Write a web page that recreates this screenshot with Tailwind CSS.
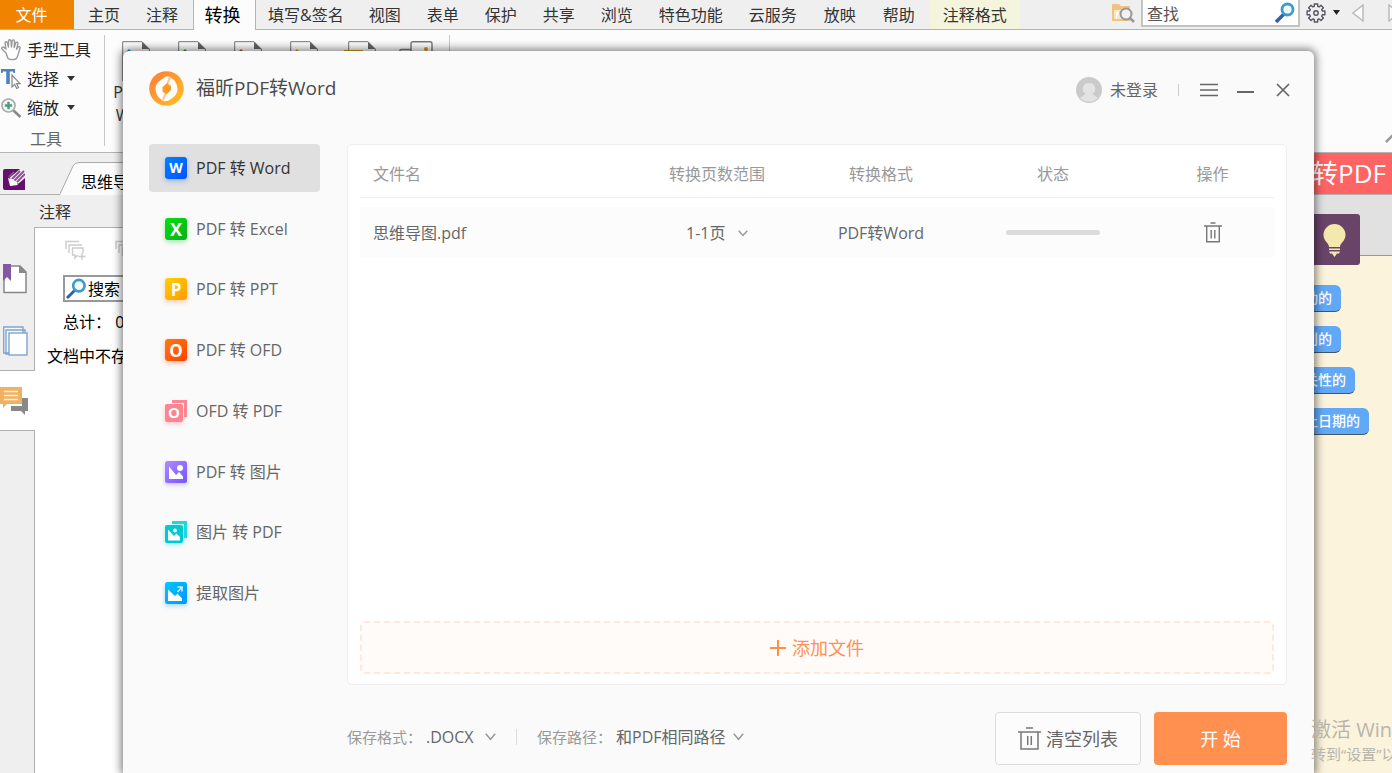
<!DOCTYPE html>
<html lang="zh-CN">
<head>
<meta charset="utf-8">
<meta name="viewport" content="width=device-width, initial-scale=1">
<title>福昕PDF转Word</title>
<script src="https://cdn.jsdelivr.net/npm/@tailwindcss/browser@4"></script>
</head>
<body class="relative h-screen overflow-hidden bg-white font-['Open_Sans','Noto_Sans_CJK_SC',sans-serif] text-base text-[#333]">

<!-- Editor window -->
<div class="flex h-full flex-col">
  <!-- Menu bar -->
  <nav class="flex h-[30px] shrink-0 border-b border-[#b4b4b4] bg-[#efefef] leading-[30px] whitespace-nowrap">
    <button class="w-[74px] bg-[#f08300] pr-[11px] text-white">文件</button>
    <button class="ml-px px-[13px]">主页</button>
    <button class="px-[13px]">注释</button>
    <button class="-mb-px ml-0.5 h-[30px] w-[63px] border-x border-[#b4b4b4] bg-[#fcfcfc] pr-1 text-lg leading-[30px] text-black">转换</button>
    <button class="px-[12px]">填写&amp;签名</button>
    <button class="px-[13px]">视图</button>
    <button class="px-[13px]">表单</button>
    <button class="px-[13px]">保护</button>
    <button class="px-[13px]">共享</button>
    <button class="px-[13px]">浏览</button>
    <button class="px-[13px]">特色功能</button>
    <button class="px-[13px]">云服务</button>
    <button class="px-[14px]">放映</button>
    <button class="px-[13px]">帮助</button>
    <button class="ml-0.5 bg-[#f4f5dc] px-[13px]">注释格式</button>
    <div class="ml-auto flex shrink-0">
      <button aria-label="搜索文件夹" class="mr-[6px] pb-0.5">
        <svg width="23" height="23" viewBox="0 0 23 23" fill="none"><path d="M0 2h7l2 2h9v15H0z" fill="#f0c382"/><path d="M2 8h15v9H2z" fill="#fae6c5"/><path d="M4 18V10h3l-3 8" fill="#fff"/><circle cx="14" cy="12" r="5.500" fill="#f2f2f2" stroke="#999" stroke-width="2"/><path d="m18 16 4 4" stroke="#999" stroke-width="2.500"/></svg>
      </button>
      <label class="flex h-[27px] w-[159px] items-center border-2 border-t-0 border-[#c3c3c3] bg-white pr-0.5">
        <input type="text" aria-label="查找" placeholder="查找" class="h-full w-full min-w-0 pt-0.5 pl-1 outline-none placeholder:text-[#555]">
        <svg class="shrink-0" width="22" height="22" viewBox="0 0 22 22" fill="none"><path d="m2 20 8-8" stroke="#355ea5" stroke-width="3.500"/><circle cx="13.500" cy="7.500" r="5.500" fill="#f3fafe" stroke="#3d9cca" stroke-width="2.800"/></svg>
      </label>
      <button aria-label="设置" class="ml-[6px] flex items-start gap-[7px] pt-[3px]">
        <svg width="20" height="20" viewBox="0 0 20 20" fill="none" stroke="#556" stroke-width="1.400"><path d="M8.300 1h3.400v2.300l1.500.6 1.700-1.600 2.500 2.500-1.700 1.700.6 1.500H18.900v3.800h-2.600l-.6 1.500 1.700 1.700-2.500 2.500-1.700-1.600-1.500.6V19H8.300v-2.500l-1.500-.6-1.700 1.600L2.600 15l1.700-1.700-.6-1.500H1.100V8h2.600l.6-1.500-1.700-1.700 2.500-2.500 1.700 1.600 1.500-.6z" stroke-linejoin="round"/><circle cx="10" cy="10" r="2.200"/></svg>
        <svg class="mt-[7px]" width="7" height="5"><path d="M0 0h7L3.500 5z" fill="#222"/></svg>
      </button>
      <button aria-label="上一个" class="ml-[12px] pb-1"><svg width="13" height="18" viewBox="0 0 13 18"><path d="M11 1v16L1 9z" fill="#fafafa" stroke="#bbb" stroke-width="1.500"/></svg></button>
      <button aria-label="下一个" class="ml-[23px] w-1 overflow-hidden pb-1"><svg width="13" height="18" viewBox="0 0 13 18"><path d="M1 1v16L11 9z" fill="#fafafa" stroke="#bbb" stroke-width="1.500"/></svg></button>
    </div>
  </nav>

  <!-- Ribbon -->
  <div class="flex h-[123px] shrink-0 border-b border-[#b4b4b4] bg-[#fcfcfc] pt-[5px]">
    <div class="flex w-[104px] shrink-0 flex-col">
      <button class="flex h-[29px] items-center gap-1 pl-px text-[#222]">
        <svg width="22" height="24" viewBox="0 0 22 24" fill="#fdfdfd" stroke="#999" stroke-width="1.400" stroke-linejoin="round"><path d="M5 15 1 11c-.8-1.500 1-2.500 2.200-1.500L5 11 4 5c0-1.700 2-1.700 2.300-.3L7.500 9V3c0-1.700 2.300-1.700 2.500 0l.5 6 .6-6c.3-1.600 2.400-1.400 2.400.2L13.200 9.500l1.500-4.500c.6-1.500 2.500-.8 2.200.7l-1.300 5.500L17 9c1-1 2.500 0 2 1.200-1 2.800-1.500 7-3.500 10.300-1 1.500-7 1.500-8.500 0z"/></svg>手型工具</button>
      <button class="flex h-[29px] items-center gap-1 pl-px text-[#222]">
        <svg width="22" height="22" viewBox="0 0 22 22"><path d="M0 1h14v4h-1.500l-.5-1.500H8.800V16H5.200V3.500H2L1.500 5H0z" fill="#4f81bd"/><path d="M11 7v12l2.700-2.500 2 4 1.800-.9-2-3.900h3.500z" fill="#fff" stroke="#888" stroke-width="1.200"/></svg>选择<svg class="ml-1" width="8" height="5"><path d="M0 0h8L4 5z" fill="#333"/></svg></button>
      <button class="flex h-[29px] items-center gap-1 pl-px text-[#222]">
        <svg width="22" height="22" viewBox="0 0 22 22" fill="none"><circle cx="7.500" cy="8.500" r="6.500" fill="#f5f9f7" stroke="#aaa" stroke-width="1.700"/><path d="M7.500 4.800v7.400M3.800 8.500h7.400" stroke="#4c9b80" stroke-width="2.400"/><path d="m12.500 13.500 7 6.500" stroke="#888" stroke-width="2.500"/></svg>缩放<svg class="ml-1" width="8" height="5"><path d="M0 0h8L4 5z" fill="#333"/></svg></button>
      <div class="h-[29px] pr-3 text-center leading-[34px] text-[#666]">工具</div>
    </div>
    <div class="mb-[6px] flex border-x border-[#c8c8c8] pt-[6px] pr-[5px] pl-[3px]">
      <button class="flex w-14 flex-col items-center leading-[23px]">
        <svg class="shrink-0" width="28" height="40" viewBox="0 0 28 40"><path d="M.7 40V.7H20l7.300 7.300v32" fill="#fff" stroke="#777"/><path d="M20 .7 27.300 8H20z" fill="#666"/><path d="M3 12 7 8l4 4z" fill="#00a5d5"/></svg>
        <span>PDF转</span><span>Word</span>
      </button>
      <button aria-label="PDF转Excel" class="flex w-14 justify-center"><svg width="28" height="40" viewBox="0 0 28 40"><path d="M.7 40V.7H20l7.300 7.300v32" fill="#fff" stroke="#777"/><path d="M20 .7 27.300 8H20z" fill="#666"/><path d="M3 12 7 8l4 4z" fill="#4c9b20"/></svg></button>
      <button aria-label="PDF转PPT" class="flex w-14 justify-center"><svg width="28" height="40" viewBox="0 0 28 40"><path d="M.7 40V.7H20l7.300 7.300v32" fill="#fff" stroke="#777"/><path d="M20 .7 27.300 8H20z" fill="#666"/><path d="M3 12 7 8l4 4z" fill="#d9452c"/></svg></button>
      <button aria-label="PDF转图片" class="flex w-14 justify-center"><svg width="28" height="40" viewBox="0 0 28 40"><path d="M.7 40V.7H20l7.300 7.300v32" fill="#fff" stroke="#777"/><path d="M20 .7 27.300 8H20z" fill="#666"/><path d="M3 12 7 8l4 4z" fill="#e0a010"/></svg></button>
      <button aria-label="转换其他格式" class="flex w-14 justify-center"><svg width="32" height="40" viewBox="0 0 32 40"><path d="M4.700 40V.7H24l7.300 7.300v32" fill="#fff" stroke="#777"/><path d="M24 .7 31.300 8H24z" fill="#666"/><path d="M0 9h19v8H0z" fill="#dfa21c"/></svg></button>
      <button aria-label="图片转PDF" class="flex w-14 justify-center"><svg width="34" height="40" viewBox="0 0 34 40" fill="#fff" stroke="#777" stroke-width="1.400"><rect x=".7" y="8.500" width="24" height="24" rx="2"/><rect x="12" y=".7" width="21" height="24" rx="2"/><circle cx="27" cy="8" r="2" fill="#d99a10" stroke="none"/></svg></button>
    </div>
    <button aria-label="折叠功能区" class="ml-auto w-[7px] self-end overflow-hidden pb-[9px]"><svg width="14" height="9" viewBox="0 0 14 9" fill="none"><path d="m1 8 6-6 6 6" stroke="#999" stroke-width="2.500"/></svg></button>
  </div>

  <!-- Document tabs -->
  <div class="flex h-[42px] shrink-0 border-b border-[#b0b0b0] bg-[#efefef]">
    <svg class="mt-4 ml-[3px] shrink-0" width="22" height="22" viewBox="0 0 22 22" fill="none"><path d="M0 2q0-2 2-2h15L7 8.500 8.500 15l7-.5L22 9v12H2q-2 0-2-2z" fill="#640f6c"/><path d="m6 8 5-5M9 10l8-8M11 12 21 2M14 13l8-8" stroke="#8e4a96" stroke-width="1.800"/><path d="m5 9 2 8 8-1-4-5z" fill="#fff"/></svg>
    <div class="ml-[35px] flex">
      <svg class="mt-[9px] -mb-px shrink-0" width="21" height="33" viewBox="0 0 21 33"><path d="M0 33 13 4q2-3.500 6-3.500h2V33z" fill="#fcfcfc"/><path d="M0 32 13 4q2-3.500 6-3.500h2" fill="none" stroke="#aaa"/></svg>
      <button class="mt-[9px] -mb-px w-[64px] overflow-hidden border-t border-r border-[#aaa] bg-[#fcfcfc] text-left leading-[38px] whitespace-nowrap text-black">思维导图</button>
    </div>
    <a href="#" class="ml-auto w-[220px] bg-[#ff6464] pr-[6px] text-right text-[26px] leading-10 text-white">PPT转PDF</a>
  </div>

  <!-- Work area -->
  <div class="flex min-h-0 flex-1">
    <aside class="flex w-[300px] shrink-0 flex-col bg-[#efefef]">
      <h2 class="h-8 shrink-0 pl-[39px] leading-[34px]">注释</h2>
      <div class="flex min-h-0 flex-1">
        <div class="flex w-[35px] shrink-0 flex-col">
          <div class="flex h-[144px] flex-col gap-8 border-r border-b border-[#b0b0b0] pt-[37px] pl-[3px]">
            <button aria-label="书签"><svg width="24" height="30" viewBox="0 0 24 30"><path d="M1 8v20.500h22V8l-6-6H8" fill="#fff" stroke="#888" stroke-width="1.500"/><path d="M16 1v8h7.500z" fill="#888"/><path d="M0 0h8v17l-4-4-4 4z" fill="#8456a4"/></svg></button>
            <button aria-label="页面"><svg width="25" height="30" viewBox="0 0 25 30" fill="#f8fbfe" stroke="#7fa5cf" stroke-width="1.400"><path d="M.7 26V1H20v26H.7zM3 28V4h19v24z"/><rect x="6" y="7" width="18" height="22" fill="#fff"/></svg></button>
          </div>
          <div class="h-[59px] bg-white pt-[15px]">
            <button aria-label="注释面板"><svg width="29" height="30" viewBox="0 0 29 30"><path d="M22 12h6v13h-3v4l-4-4H11v-5h11z" fill="#888"/><path d="M0 1h22v17H7l-4 4v-4H0z" fill="#efb263"/><path d="M4 5.500h14M4 9.500h14M4 13.500h14" stroke="#fff2dc" stroke-width="1.700"/></svg></button>
          </div>
          <div class="flex-1 border-t border-r border-[#b0b0b0]"></div>
        </div>
        <section class="flex-1 border-t border-[#b0b0b0] bg-white text-black">
          <div class="flex gap-[29px] pt-[12px] pl-[30px]">
            <button aria-label="展开全部"><svg width="21" height="21" viewBox="0 0 21 21" fill="none" stroke="#ccc" stroke-width="1.400"><path d="M1 9V1.500h13M4 13V5h13M18 13V8H7.500v7H10v3l3-3M17 13v7m-3.500-3.500h7"/></svg></button>
            <button aria-label="折叠全部"><svg width="21" height="21" viewBox="0 0 21 21" fill="none" stroke="#ccc" stroke-width="1.400"><path d="M1 9V1.500h13M4 13V5h13M18 13V8H7.500v7H10v3l3-3M13.500 16.500h7"/></svg></button>
          </div>
          <label class="mt-[14px] ml-[28px] flex h-[27px] w-[200px] items-center gap-px border-2 border-[#999] pl-px">
            <svg class="shrink-0" width="21" height="21" viewBox="0 0 22 22" fill="none"><path d="m1 21 8-8" stroke="#355ea5" stroke-width="3"/><circle cx="13.500" cy="8" r="6" fill="#f3fafe" stroke="#3d9cca" stroke-width="2.800"/></svg>
            <input type="text" aria-label="搜索" placeholder="搜索" class="w-full min-w-0 outline-none placeholder:text-black">
          </label>
          <p class="mt-[3px] pl-[28px] leading-[34px]">总计：&nbsp;0</p>
          <p class="pl-[12px] leading-[35px]">文档中不存在</p>
        </section>
      </div>
    </aside>
    <!-- Mind map -->
    <main class="relative flex-1 bg-[#fbf3dc]">
      <div class="h-[61px] border-b border-[#999] bg-[#e1e1e1]"></div>
      <button aria-label="提示" class="absolute top-[19px] right-8 flex h-[51px] w-[60px] justify-end rounded-[3px] bg-[#694468] pt-[10px] pr-[14px]">
        <svg width="23" height="33" viewBox="0 0 23 33"><path d="M6 23c0-4-5.500-6-5.500-12a11 11 0 0 1 22 0c0 6-5.500 8-5.500 12z" fill="#f3e9ad"/><path d="M6 24.500h11v1.500H6zM6 27.500h11l-1 2h-2L11.500 33 9 29.500H7z" fill="#f3e9ad"/></svg>
      </button>
      <ul class="absolute top-[90px] right-[23px] flex w-[102px] flex-col items-start gap-[14px] text-sm leading-[26px] font-medium whitespace-nowrap text-white">
        <li class="rounded-md border-b border-[#456] bg-[#61a9f8] px-[9px]">可行动的</li>
        <li class="rounded-md border-b border-[#456] bg-[#61a9f8] px-[9px]">可识别的</li>
        <li class="rounded-md border-b border-[#456] bg-[#61a9f8] px-[9px]">有相关性的</li>
        <li class="rounded-md border-b border-[#456] bg-[#61a9f8] px-[9px]">有截止日期的</li>
      </ul>
    </main>
  </div>
</div>

<!-- Converter dialog -->
<div role="dialog" aria-labelledby="dialog-title" class="absolute top-[51px] right-[78px] bottom-0 left-[123px] flex flex-col rounded-t-md bg-[#fafafa] pr-[27px] pl-[26px] text-[#666] shadow-[0_0_8px_2px_rgba(0,0,0,0.5)]">
  <header class="flex h-[93px] shrink-0 items-start pt-5">
    <div class="flex h-[34px] items-center gap-3">
      <svg width="35" height="35" viewBox="0 0 35 35"><defs><linearGradient id="ring" x1="0" y1="0" x2="1" y2="1"><stop offset="0" stop-color="#ff7a3c"/><stop offset="1" stop-color="#ffc322"/></linearGradient></defs><circle cx="17.500" cy="17.500" r="17.300" fill="url(#ring)"/><path d="M15 7q2.500-3 6.500-.5 7 4 7 11.500 0 6-6.500 10-5 4-9 1-6.500-4-6.500-11.500 0-6 8.500-10.500z" fill="#fff"/><path d="m20 5.500 2 1-3 7.500-2-.5zM15 29.500l-2-1 3-7.500 2 .5z" fill="#ffc690"/><path d="m18 12 4 3v4l-4.500 4.500-4-3v-4.500z" fill="#ff9c25"/></svg>
      <h1 id="dialog-title" class="text-[19px] text-[#4a4a4a]">福昕PDF转Word</h1>
    </div>
    <div class="ml-auto flex h-[38px] items-center">
      <button class="flex items-center gap-2"><svg width="26" height="26" viewBox="0 0 26 26"><circle cx="13" cy="13" r="13" fill="#cacaca"/><path d="M13 6a6 6 0 0 1 3.500 11l5.500 4a13 13 0 0 1-18 0l5.500-4A6 6 0 0 1 13 6z" fill="#e3e3e3"/></svg>未登录</button>
      <span class="ml-[20px] h-3 w-px bg-[#ccc]"></span>
      <button aria-label="菜单" class="ml-[21px]"><svg width="18" height="14" stroke="#666" stroke-width="1.600"><path d="M0 1.500h18M0 7h18M0 12.500h18"/></svg></button>
      <button aria-label="最小化" class="ml-[19px] pt-[5px]"><svg width="17" height="3"><path d="M0 0h17v2H0z" fill="#666"/></svg></button>
      <button aria-label="关闭" class="mr-[-4px] ml-[21px]"><svg width="16" height="14" viewBox="0 0 16 14" stroke="#666" stroke-width="1.700"><path d="m2 1 12 12M14 1 2 13"/></svg></button>
    </div>
  </header>

  <div class="flex min-h-0 flex-1 gap-[27px]">
    <nav class="flex h-[473px] w-[171px] shrink-0 flex-col justify-between">
      <button class="flex h-12 shrink-0 items-center gap-[9px] rounded bg-[#e0e0e0] pl-4 text-[#333]">
        <span class="flex size-[22px] items-center justify-center rounded-[3px] bg-linear-to-br from-[#0783ff] to-[#0050ff] text-[14px] leading-none font-bold text-white shadow-[0_2px_5px_#0060ff55]">W</span>PDF 转 Word</button>
      <button class="flex h-12 shrink-0 items-center gap-[9px] pl-4">
        <span class="flex size-[22px] items-center justify-center rounded-[3px] bg-linear-to-br from-[#00e30b] to-[#0cae18] text-[18px] leading-none font-bold text-white shadow-[0_2px_5px_#00b01055]">X</span>PDF 转 Excel</button>
      <button class="flex h-12 shrink-0 items-center gap-[9px] pl-4">
        <span class="flex size-[22px] items-center justify-center rounded-[3px] bg-linear-to-br from-[#ffd000] to-[#ff9c00] text-[17px] leading-none font-bold text-white shadow-[0_2px_5px_#ff700055]">P</span>PDF 转 PPT</button>
      <button class="flex h-12 shrink-0 items-center gap-[9px] pl-4">
        <span class="flex size-[22px] items-center justify-center rounded-[3px] bg-linear-to-br from-[#ff7a10] to-[#ff3c00] text-[17px] leading-none font-bold text-white shadow-[0_2px_5px_#ff400055]">O</span>PDF 转 OFD</button>
      <button class="flex h-12 shrink-0 items-center gap-[9px] pl-4">
        <span class="flex size-[22px] items-end bg-[linear-gradient(#ff8795,#ff8795),linear-gradient(#ff8795,#ff8795)] bg-[size:15px_3px,3px_17px] bg-[position:top_right,top_right] bg-no-repeat"><span class="flex size-[18px] items-center justify-center rounded-[2px] bg-[#ff8390] text-[15px] leading-none font-bold text-white shadow-[0_2px_5px_#ff607055]">O</span></span>OFD 转 PDF</button>
      <button class="flex h-12 shrink-0 items-center gap-[9px] pl-4">
        <svg class="overflow-visible drop-shadow-[0_2px_2px_#7a50ff55]" width="22" height="22" viewBox="0 0 22 22"><defs><linearGradient id="violet" x1="0" y1="0" x2="1" y2="1"><stop offset="0" stop-color="#b08aff"/><stop offset="1" stop-color="#7654ff"/></linearGradient></defs><rect width="22" height="22" rx="2.500" fill="url(#violet)"/><path d="M4 5.500 11 14l3-3 4 4.500V18H4z" fill="#fff"/><circle cx="15" cy="7" r="3" fill="#fff"/></svg>PDF 转 图片</button>
      <button class="flex h-12 shrink-0 items-center gap-[9px] pl-4">
        <svg class="overflow-visible drop-shadow-[0_2px_2px_#00c8c855]" width="22" height="22" viewBox="0 0 22 22"><path d="M7 0h15v17h-3V3H7z" fill="#1fd8d8"/><rect y="4" width="18" height="18" rx="2" fill="#00c9d4"/><path d="M3 8.500 9 15l2.500-2.500L15 16v3.500H3z" fill="#fff"/><circle cx="10" cy="9.500" r="1.900" fill="#fff"/></svg>图片 转 PDF</button>
      <button class="flex h-12 shrink-0 items-center gap-[9px] pl-4">
        <svg class="overflow-visible drop-shadow-[0_2px_2px_#008cff55]" width="22" height="22" viewBox="0 0 22 22"><defs><linearGradient id="sky" x1="0" y1="0" x2="1" y2="1"><stop offset="0" stop-color="#00c8ff"/><stop offset="1" stop-color="#0094ff"/></linearGradient></defs><rect width="22" height="22" rx="2.500" fill="url(#sky)"/><path d="M3 7.500 10 14l2.500-2.500L17 16.500V19H3z" fill="#fff"/><path d="M12.500 5H17v4.500M17 5l-4.500 5" fill="none" stroke="#c9efff" stroke-width="1.600"/></svg>提取图片</button>
    </nav>

    <section class="flex min-w-0 flex-1 flex-col rounded-[5px] border border-[#efefef] bg-white px-3 pb-[10px]">
      <table class="w-full table-fixed border-separate border-spacing-0">
        <thead>
          <tr class="h-[53px] text-[#999]">
            <th scope="col" class="border-b border-[#efefef] pt-[6px] pl-[13px] text-left font-normal">文件名</th>
            <th scope="col" class="w-[180px] border-b border-[#efefef] pt-[6px] font-normal">转换页数范围</th>
            <th scope="col" class="w-[148px] border-b border-[#efefef] pt-[6px] font-normal">转换格式</th>
            <th scope="col" class="w-[196px] border-b border-[#efefef] pt-[6px] font-normal">状态</th>
            <th scope="col" class="w-[123px] border-b border-[#efefef] pt-[6px] font-normal">操作</th>
          </tr>
        </thead>
        <tbody class="before:block before:h-[9px] before:content-['']">
          <tr class="h-[51px] bg-[#fcfcfc] text-center">
            <td class="pl-[13px] text-left">思维导图.pdf</td>
            <td>
              <div class="relative inline-block w-[62px] align-middle">
                <select aria-label="转换页数范围" class="w-full appearance-none outline-none"><option>1-1页</option></select>
                <svg class="pointer-events-none absolute top-[9px] right-0" width="10" height="7" viewBox="0 0 10 7" fill="none"><path d="m.7.8 4.300 4.700L9.300.8" stroke="#999" stroke-width="1.500"/></svg>
              </div>
            </td>
            <td>PDF转Word</td>
            <td><div role="progressbar" aria-label="转换进度" aria-valuenow="0" class="mx-auto h-[5px] w-[94px] rounded-full bg-[#dcdcdc]"></div></td>
            <td><button aria-label="删除" class="block w-full"><svg class="mx-auto" width="18" height="21" viewBox="0 0 18 21" fill="none" stroke="#777" stroke-width="1.400"><path d="M6.500 1h5M0 4h18M2.700 4v15.800h12.600V4M7.200 8v8.500M10.800 8v8.500"/></svg></button></td>
          </tr>
        </tbody>
      </table>
      <button class="mt-auto flex h-[53px] items-center justify-center gap-[6px] rounded border-2 border-dashed border-[#ffe8dc] bg-[#fffbf9] text-lg text-[#ff9050]"><svg width="16" height="16"><path d="M7 0h2v7h7v2H9v7H7V9H0V7h7z" fill="#ff9040"/></svg>添加文件</button>
    </section>
  </div>

  <footer class="flex shrink-0 items-start pt-[27px] pb-2 pl-[198px]">
    <div class="flex h-[50px] items-center whitespace-nowrap">
      <label for="format" class="text-[15px] text-[#999]">保存格式：</label>
      <div class="relative ml-1 w-[70px]">
        <select id="format" class="w-full appearance-none outline-none"><option>.DOCX</option></select>
        <svg class="pointer-events-none absolute top-[8px] right-0" width="11" height="8" viewBox="0 0 11 8" fill="none"><path d="m.8.8 4.700 5.500L10.200.8" stroke="#999" stroke-width="1.500"/></svg>
      </div>
      <span class="mx-[20px] h-4 w-px bg-[#ddd]"></span>
      <label for="path" class="text-[15px] text-[#999]">保存路径：</label>
      <div class="relative ml-1 w-[128px]">
        <select id="path" class="w-full appearance-none outline-none"><option>和PDF相同路径</option></select>
        <svg class="pointer-events-none absolute top-[8px] right-0" width="11" height="8" viewBox="0 0 11 8" fill="none"><path d="m.8.8 4.700 5.500L10.200.8" stroke="#999" stroke-width="1.500"/></svg>
      </div>
    </div>
    <div class="ml-auto flex gap-[13px] text-lg">
      <button class="flex h-[53px] w-[146px] items-center justify-center gap-[5px] rounded border border-[#dcdcdc] bg-[#fcfcfc]"><svg width="23" height="23" viewBox="0 0 23 23" fill="none" stroke="#777" stroke-width="1.500"><path d="M8 1h7M0 5h23M3 5v17h17V5M9.700 9v9M13.300 9v9"/></svg>清空列表</button>
      <button class="h-[53px] w-[133px] rounded bg-[#ff9050] text-white">开 始</button>
    </div>
  </footer>
</div>

<!-- System activation notice -->
<div class="pointer-events-none absolute right-0 bottom-[7px] w-[81px] overflow-hidden text-[15px] leading-6 whitespace-nowrap text-[#b9b5aa]">
  <p class="text-xl leading-6">激活 Windows</p>
  <p>转到“设置”以激活 Windows。</p>
</div>
</body>
</html>
